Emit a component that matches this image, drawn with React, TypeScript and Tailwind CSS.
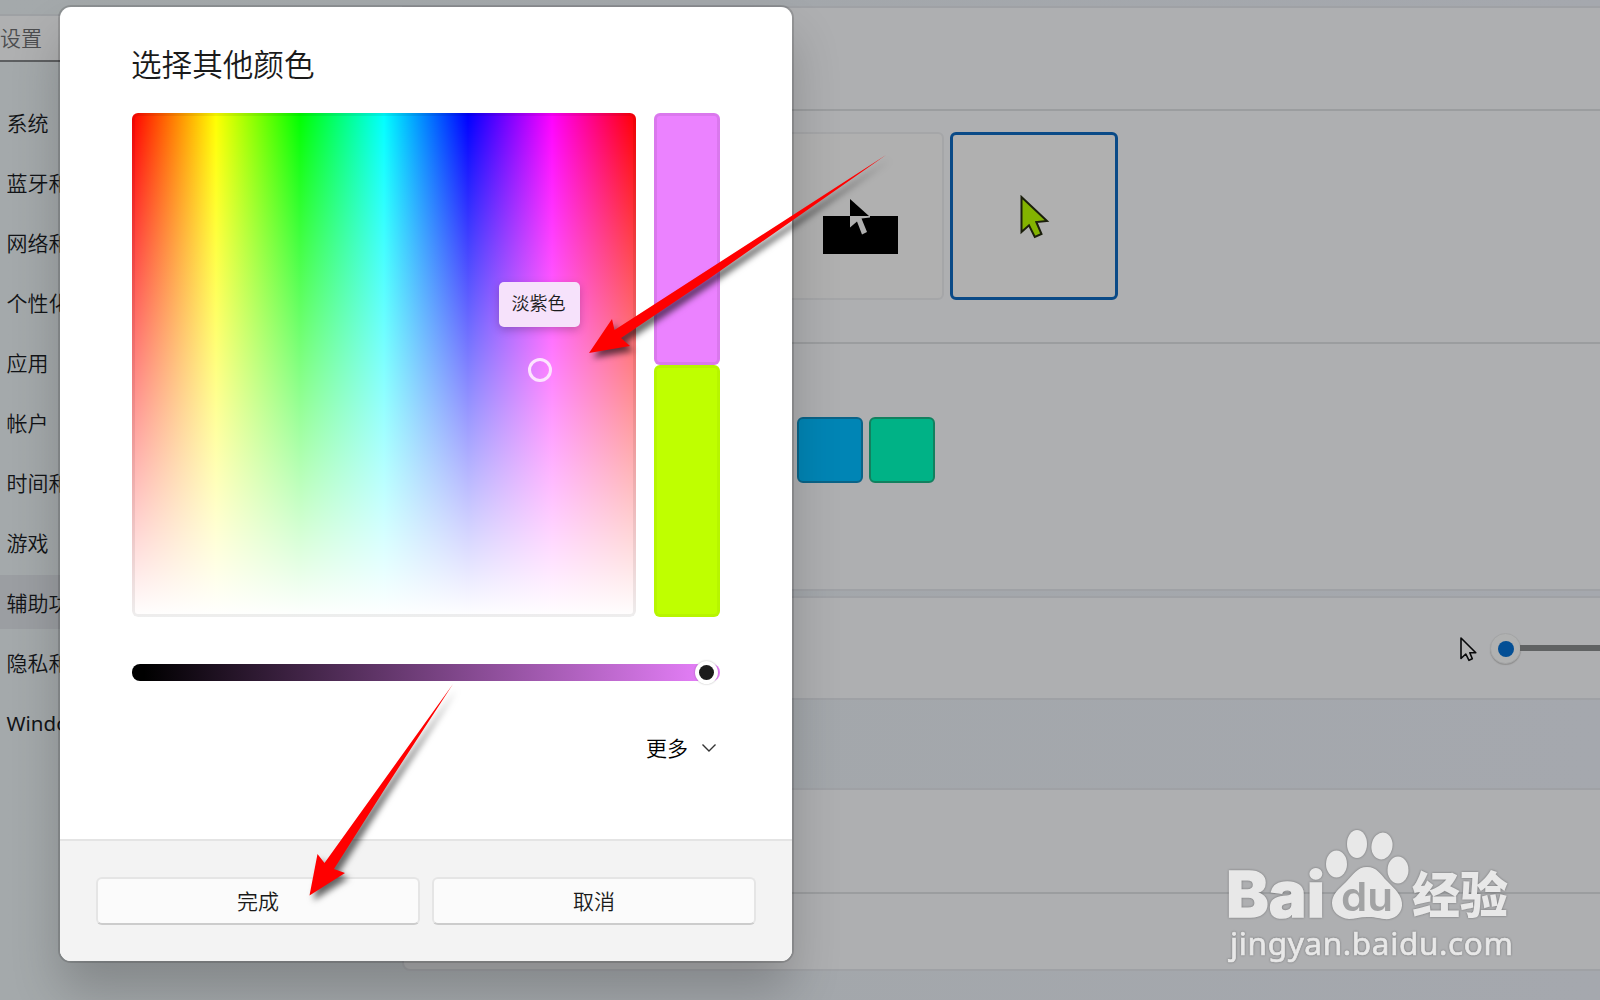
import React from 'react'
import clsx from 'clsx'

const navItems = [
  '系统',
  '蓝牙和其他设备',
  '网络和 Internet',
  '个性化',
  '应用',
  '帐户',
  '时间和语言',
  '游戏',
  '辅助功能',
  '隐私和安全性',
  'Windows 更新',
]

const Sidebar = () => {
  return (
    <nav className="w-[402px] shrink-0 overflow-hidden pt-[14px] text-[21px] text-[#121417]">
      <div className="flex h-12 w-[380px] items-center rounded-r-md border-t-2 border-b-2 border-t-[#9ea1a4] border-b-[#5d5f61] bg-[#afb0b1] pt-[2px] text-[#4c4d4f]">
        <span>设置</span>
      </div>
      <ul className="mt-[30px]">
        {navItems.map((item) => (
          <li key={item} className="flex h-[60px] items-center">
            <div className={clsx('flex h-[54px] w-[380px] items-center pt-[3px] pl-[7px]', item === '辅助功能' && 'bg-[#9b9ea2]')}>
              <span className={clsx('-ml-[0.5px] whitespace-nowrap', item.startsWith('Windows') && 'text-[20.5px] font-normal')}>{item}</span>
            </div>
          </li>
        ))}
      </ul>
    </nav>
  )
}

const InvertedPointer = () => (
  <svg className="block" width="76" height="56" viewBox="0 0 76 56">
    <rect x="0" y="17" width="75" height="38" />
    <path d="M27 0 L46 17 H27 Z" />
    <path d="M27 17 H47 V18.5 L38.5 19.5 L44 33 L39 35.5 L34 22.5 L27 28.5 Z" fill="#b0b0b0" />
  </svg>
)

const GreenPointer = () => (
  <svg className="block" width="30" height="44" viewBox="0 0 30 44">
    <path d="M1.5 2 V37 L9 30.3 L14.8 42 L21.5 39 L16.3 27 L27 26 Z" fill="#83b300" stroke="#1b1f0c" strokeWidth="2" />
  </svg>
)

const Content = () => {
  return (
    <main className="flex flex-1 flex-col pt-[6px]">
      {/* pointer style and colour */}
      <section className="-mr-4 flex h-[585px] flex-col border-2 border-[#9fa1a5] bg-[#aeafb1]">
        <div className="h-[103px] border-b-2 border-[#9b9d9f]" />
        <div className="flex h-[233px] justify-start gap-[6px] border-b-2 border-[#9b9d9f] pt-[21px] pl-[372px]">
          <div className="flex h-[168px] w-[168px] items-start rounded-md border-2 border-[#a5a6a8] bg-[#b0b0b0] pt-[65px] pl-[45px]">
            <InvertedPointer />
          </div>
          <div className="flex h-[168px] w-[168px] items-start rounded-md border-[3px] border-[#0a4a87] bg-[#b0b0b0] pt-[60px] pl-[67px]">
            <GreenPointer />
          </div>
        </div>
        <div className="flex gap-[6px] pt-[73px] pl-[393px]">
          <div className="h-[66px] w-[66px] rounded-md border-2 border-[#0a6387] bg-[#0085b5]" />
          <div className="h-[66px] w-[66px] rounded-md border-2 border-[#12805f] bg-[#00b286]" />
        </div>
      </section>

      {/* size */}
      <section className="mt-[5px] -mr-4 flex h-[104px] items-start justify-end border-2 border-[#9fa1a5] bg-[#aeafb1]">
        <svg className="mt-[38px] mr-[11px]" width="20" height="26" viewBox="0 0 20 26">
          <path d="M2 2 V22.5 L6.8 18 L10 24.3 L13.3 22.8 L10.8 16.7 H16.8 Z" fill="#b3b3b3" stroke="#08090a" strokeWidth="1.6" strokeLinejoin="round" />
        </svg>
        <div className="mt-[35px] mr-[13px] flex items-center">
          <div className="flex h-[31px] w-[31px] items-center justify-center rounded-full border border-[#a4a5a6] bg-[#b0b1b1] shadow-[0_1px_1px_#909090]">
            <div className="h-4 w-4 rounded-full bg-[#044f95]" />
          </div>
          <div className="-mt-[1px] -ml-[1px] h-[6px] w-[81px] bg-[#606263]" />
        </div>
      </section>

      <section className="mt-[88px] -mr-4 h-[183px] rounded-bl-lg border-2 border-[#9fa1a5] bg-[#aeafb1]">
        <div className="h-[104px] border-b-2 border-[#9b9d9f]" />
      </section>
    </main>
  )
}

const Spectrum = () => (
  <div className="relative h-[504px] w-[504px] rounded-[6px] bg-[linear-gradient(to_bottom,rgba(255,255,255,0),#fff),linear-gradient(to_right,#f00,#ff0_16.67%,#0f0_33.33%,#0ff_50%,#00f_66.67%,#f0f_83.33%,#f00)] shadow-[inset_0_0_0_3px_rgba(0,0,0,0.065)]">
    {/* name of the picked colour */}
    <div className="absolute top-[169px] left-[367px] flex h-[45px] w-[81px] items-center justify-center rounded-[5px] bg-[#f6e2fb] pr-[2px] pb-[2px] text-[18px] text-[#1b1b1b] shadow-[0_3px_8px_rgba(0,0,0,0.22)]">
      淡紫色
    </div>
    <div className="absolute top-[245px] left-[396px] h-6 w-6 rounded-full border-[3px] border-[#fde3ff]" />
  </div>
)

const ColorDialog = () => {
  return (
    <div className="absolute top-[7px] left-[60px] flex h-[954px] w-[732px] flex-col overflow-hidden rounded-[11px] bg-white text-[21px] text-[#1a1a1a]">
      <div className="flex h-[832px] flex-col px-[72px] pt-[34px]">
        <h1 className="-ml-[1px] h-[72px] text-[30.6px] leading-[46px]">选择其他颜色</h1>
        <div className="flex gap-[18px]">
          <Spectrum />
          <div className="flex w-[66px] flex-col">
            <div className="h-[252px] rounded-[6px] bg-[#eb82ff] shadow-[inset_0_0_0_3px_rgba(0,0,0,0.07)]" />
            <div className="h-[252px] rounded-[6px] bg-[#bfff00] shadow-[inset_0_0_0_3px_rgba(0,0,0,0.04)]" />
          </div>
        </div>
        <div className="mt-[47px] flex h-[17px] items-center justify-end rounded-[8px] bg-[linear-gradient(to_right,#000_2%,#eb82ff)]">
          <div className="mr-[2px] flex h-[23px] w-[23px] shrink-0 items-center justify-center rounded-full bg-white shadow-[0_0_2px_rgba(0,0,0,0.3)]">
            <div className="h-[15px] w-[15px] rounded-full bg-[#1b1b1b]" />
          </div>
        </div>
        <div className="mt-[50px] flex items-center justify-end pr-[3px]">
          <span className="pt-[2px] text-black">更多</span>
          <svg className="ml-[13px]" width="16" height="10" viewBox="0 0 16 10" fill="none" stroke="#333" strokeWidth="1.4">
            <path d="M1.5 1.5 L8 8 L14.5 1.5" />
          </svg>
        </div>
      </div>
      <div className="flex flex-1 items-start justify-between border-t-2 border-[#e4e4e4] bg-[#f3f3f3] px-[36px] pt-[36px]">
        <button className="h-12 w-[324px] rounded-[6px] border-2 border-[#e5e5e5] border-b-[#cccccc] bg-[#fbfbfb] pt-[1px]">完成</button>
        <button className="h-12 w-[324px] rounded-[6px] border-2 border-[#e5e5e5] border-b-[#cccccc] bg-[#fbfbfb] pt-[1px]">取消</button>
      </div>
    </div>
  )
}

const Arrows = () => (
  <svg className="absolute inset-0 drop-shadow-[4px_5px_3px_rgba(0,0,0,0.6)]" width="1600" height="1000" viewBox="0 0 1600 1000" fill="#ff0000">
    <path d="M886 155 L614.5 330 L612 319 L589 353 L630 346 L621 338 L710 278 Z" />
    <path d="M453 684 L324.5 863 L317.5 854 L309.5 895.5 L345 873 L334 869 L388 784 Z" />
  </svg>
)

const Watermark = () => (
  <svg className="absolute top-[820px] left-[1220px] drop-shadow-[0_0_1px_rgba(0,0,0,0.35)]" width="300" height="150" viewBox="0 0 300 150" fill="#e8e8e8">
    <text x="6" y="97" fontSize="63" fontWeight="800" fontFamily="Inter, sans-serif" textLength="99" lengthAdjust="spacingAndGlyphs" stroke="#e8e8e8" strokeWidth="1.5">Bai</text>
    <ellipse cx="116.5" cy="44" rx="10.5" ry="13.5" />
    <ellipse cx="137" cy="24" rx="10" ry="14" />
    <ellipse cx="162" cy="26" rx="10.5" ry="13.5" transform="rotate(10 162 26)" />
    <ellipse cx="178" cy="50" rx="10.5" ry="13.5" />
    <path d="M147 47 C157 47 160 54 167 61 C175 69 183 76 182 86 C181 95 173 100 164 99 C158 98 154 97 147 97 C140 97 135 99 129 99 C119 98 112 92 112 83 C112 74 119 69 126 62 C133 55 137 47 147 47 Z" />
    <text x="121" y="91" fontSize="40" fontWeight="600" fontFamily="Inter, sans-serif" textLength="52" lengthAdjust="spacingAndGlyphs" fill="#a2a3a4">du</text>
    <text x="192" y="93" fontSize="49" fontWeight="900" fontFamily="Noto Sans CJK SC, sans-serif" textLength="96" lengthAdjust="spacingAndGlyphs">经验</text>
    <text x="10" y="135" fontSize="31.5" fontWeight="400" fontFamily="Noto Sans, sans-serif" textLength="283" stroke="#e8e8e8" strokeWidth="0.7">jingyan.baidu.com</text>
  </svg>
)

export default function App() {
  return (
    <div className="relative flex h-screen w-full overflow-hidden bg-[linear-gradient(to_right,#a4a9ab,#a3a7ab_45%,#a5a8ae)] font-['Noto_Sans','Noto_Sans_CJK_SC',sans-serif] font-[350]">
      <Sidebar />
      <Content />
      {/* dialog shadow sits apart so it falls on the dimmed page only */}
      <div className="absolute top-[7px] left-[60px] h-[954px] w-[732px] rounded-[11px] shadow-[0_0_0_2px_rgba(0,0,0,0.14),0_30px_50px_rgba(0,0,0,0.2)]" />
      <ColorDialog />
      <Watermark />
      <Arrows />
    </div>
  )
}
